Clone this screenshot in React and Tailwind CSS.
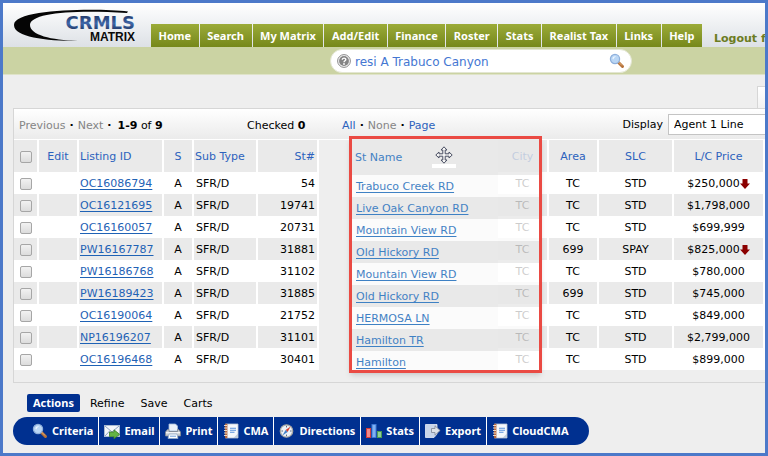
import React from 'react';

const navItems = ['Home', 'Search', 'My Matrix', 'Add/Edit', 'Finance', 'Roster', 'Stats', 'Realist Tax', 'Links', 'Help'];

const listings = [
  { id: 'OC16086794', num: '54', street: 'Trabuco Creek RD', area: 'TC', slc: 'STD', price: '$250,000', drop: true },
  { id: 'OC16121695', num: '19741', street: 'Live Oak Canyon RD', area: 'TC', slc: 'STD', price: '$1,798,000' },
  { id: 'OC16160057', num: '20731', street: 'Mountain View RD', area: 'TC', slc: 'STD', price: '$699,999' },
  { id: 'PW16167787', num: '31881', street: 'Old Hickory RD', area: '699', slc: 'SPAY', price: '$825,000', drop: true },
  { id: 'PW16186768', num: '31102', street: 'Mountain View RD', area: 'TC', slc: 'STD', price: '$780,000' },
  { id: 'PW16189423', num: '31885', street: 'Old Hickory RD', area: '699', slc: 'STD', price: '$745,000' },
  { id: 'OC16190064', num: '21752', street: 'HERMOSA LN', area: 'TC', slc: 'STD', price: '$849,000' },
  { id: 'NP16196207', num: '31101', street: 'Hamilton TR', area: 'TC', slc: 'STD', price: '$2,799,000' },
  { id: 'OC16196468', num: '30401', street: 'Hamilton', area: 'TC', slc: 'STD', price: '$899,000' },
];

const Logo = () => (
  <svg viewBox="0 0 148 44" className="w-[148px] h-[44px] shrink-0" role="img" aria-label="CRMLS Matrix">
    <defs>
      <linearGradient id="logoBlue" x1="0" y1="0" x2="0" y2="1">
        <stop offset="0" stopColor="#16264f" />
        <stop offset="0.55" stopColor="#3f66a8" />
        <stop offset="1" stopColor="#14244a" />
      </linearGradient>
    </defs>
    <path d="M125 8.5 C92 5 11 6 11 22 C11 34 42 38 75 38 C48 37 27 32 27 22 C27 10 70 6.5 124 10 Z" fill="#050505" />
    <text x="132" y="26" textAnchor="end" fontFamily="DejaVu Sans, sans-serif" fontWeight="700" fontSize="18" fill="url(#logoBlue)">CRMLS</text>
    <text x="132" y="38" textAnchor="end" fontFamily="Liberation Sans, sans-serif" fontWeight="700" fontSize="12" fill="#0a0a0a">MATRIX</text>
  </svg>
);

const Magnifier = () => (
  <svg viewBox="0 0 16 16" className="w-4 h-4 shrink-0" aria-hidden="true">
    <path d="M9.5 9.5 L13.5 13.5" stroke="#b5713a" strokeWidth="3" strokeLinecap="round" />
    <path d="M9.5 9 L13 12.5" stroke="#e3b078" strokeWidth="1" />
    <circle cx="6" cy="6" r="4.6" fill="#b9d6f5" stroke="#8fb0dc" strokeWidth="1.2" />
    <path d="M3.4 5.6 C3.8 3.8 5.4 3 7 3.4 C5.6 4 4.8 5 4.4 6.6 Z" fill="#eef6ff" />
  </svg>
);

const HelpIcon = () => (
  <svg viewBox="0 0 16 16" className="w-4 h-4 shrink-0" aria-hidden="true">
    <circle cx="8" cy="8" r="6.4" fill="#f4f4f4" stroke="#8d8d8d" />
    <circle cx="8" cy="8" r="4.9" fill="#858585" />
    <path d="M6.2 6.8 C6.2 4.6 9.8 4.6 9.8 6.6 C9.8 7.8 8 7.8 8 9.2" fill="none" stroke="#fff" strokeWidth="1.4" />
    <circle cx="8" cy="11" r="0.9" fill="#fff" />
  </svg>
);

const EmailIcon = () => (
  <svg viewBox="0 0 16 16" className="w-4 h-4 shrink-0" aria-hidden="true">
    <rect x="0.5" y="2.5" width="15" height="11" fill="#f3f6fa" stroke="#a9bbd2" />
    <path d="M1 3 L8 9 L15 3 M1 13 L6 7.6 M15 13 L10 7.6" fill="none" stroke="#8ba3c4" strokeWidth="1" />
    <path d="M5.5 9 H10 V6.8 L15.6 11.3 L10 15.8 V13.6 H5.5 Z" fill="#63b445" stroke="#3c7f27" strokeWidth="0.8" />
  </svg>
);

const PrintIcon = () => (
  <svg viewBox="0 0 16 16" className="w-4 h-4 shrink-0" aria-hidden="true">
    <path d="M4 1 H10.5 L12.5 3 V8 H4 Z" fill="#e9f1fb" stroke="#a4bddb" strokeWidth="0.8" />
    <path d="M2.5 6.5 H4 V8.5 H12.5 V6.5 H13.5 L15.5 9 V13 H0.5 V9 Z" fill="#c7cbd0" stroke="#878d94" strokeWidth="0.8" />
    <rect x="1" y="9" width="14" height="1.4" fill="#f2f3f5" />
    <path d="M4 11 H12 L13 15.5 H3 Z" fill="#fff" stroke="#8fa9c9" strokeWidth="0.8" />
    <path d="M5 13.2 H11" stroke="#6f9fda" />
  </svg>
);

const BookIcon = () => (
  <svg viewBox="0 0 16 16" className="w-4 h-4 shrink-0" aria-hidden="true">
    <path d="M2.5 1 H15 V15 H2.5 Z" fill="#f5f8fc" stroke="#b9c4d3" strokeWidth="0.8" />
    <rect x="2" y="0.8" width="2.4" height="14.4" fill="#b4653c" />
    <path d="M1 2.5 H4 M1 5 H4 M1 7.5 H4 M1 10 H4 M1 12.5 H4" stroke="#ead9c8" strokeWidth="1" />
    <path d="M7 5.2 H13 M7 7.2 H13 M7 9.2 H11.5" stroke="#5b93dc" strokeWidth="1.1" />
    <path d="M10.5 15 L15 10.5 V15 Z" fill="#c2cddb" />
  </svg>
);

const CompassIcon = () => (
  <svg viewBox="0 0 16 16" className="w-4 h-4 shrink-0" aria-hidden="true">
    <circle cx="7.5" cy="8" r="6.2" fill="#edf2f7" stroke="#a9a9a4" strokeWidth="1.3" />
    <path d="M7.5 2.8 V4.4 M7.5 11.6 V13.2 M2.4 8 H4 M11 8 H12.6" stroke="#5a6b80" />
    <path d="M11.6 3.4 L8.6 9 L6.6 7 Z" fill="#d6402e" />
    <path d="M3.4 12.6 L6.6 7 L8.6 9 Z" fill="#4382c8" />
  </svg>
);

const StatsIcon = () => (
  <svg viewBox="0 0 16 16" className="w-4 h-4 shrink-0" aria-hidden="true">
    <rect x="0.5" y="5.5" width="4" height="9" fill="#f08a8a" stroke="#d43a3a" />
    <rect x="6" y="1.5" width="4" height="13" fill="#7fb0f2" stroke="#3f78d4" />
    <rect x="11.5" y="8.5" width="4" height="6" fill="#8fce95" stroke="#4a9c55" />
  </svg>
);

const ExportIcon = () => (
  <svg viewBox="0 0 16 16" className="w-4 h-4 shrink-0" aria-hidden="true">
    <path d="M0.5 1.5 H12 V11 L9 14.5 H0.5 Z" fill="#c9d6ea" stroke="#e8eef7" strokeWidth="0.8" />
    <path d="M6.5 5.5 H10 V2.8 L15.2 7.5 L10 12.2 V9.5 H6.5 Z" fill="#dfe3e8" stroke="#7d8794" strokeWidth="0.8" />
  </svg>
);

const DropArrow = () => (
  <svg viewBox="0 0 10 10" className="w-[10px] h-[10px] shrink-0" role="img" aria-label="Price drop">
    <path d="M2.5 0 H7.5 V4.5 H10 L5 10 L0 4.5 H2.5 Z" fill="#8b0000" />
  </svg>
);

const MoveCursor = () => (
  <svg viewBox="0 0 18 18" className="w-[18px] h-[18px]" aria-hidden="true">
    <path
      d="M9 0.8 L12 4 H10.2 V7.8 H14 V6 L17.2 9 L14 12 V10.2 H10.2 V14 H12 L9 17.2 L6 14 H7.8 V10.2 H4 V12 L0.8 9 L4 6 V7.8 H7.8 V4 H6 Z"
      fill="#f5f5f5"
      stroke="#4a4f63"
      strokeWidth="1"
    />
  </svg>
);

const actions = [
  { label: 'Criteria', Icon: Magnifier },
  { label: 'Email', Icon: EmailIcon },
  { label: 'Print', Icon: PrintIcon },
  { label: 'CMA', Icon: BookIcon },
  { label: 'Directions', Icon: CompassIcon },
  { label: 'Stats', Icon: StatsIcon },
  { label: 'Export', Icon: ExportIcon },
  { label: 'CloudCMA', Icon: BookIcon },
];

const Check = ({ label }) => (
  <input
    type="checkbox"
    aria-label={label}
    className="block mx-auto appearance-none w-3 h-3 rounded-xs border border-[#a6a6a6] bg-linear-to-b from-[#f2f2f2] to-[#dcdcdc]"
  />
);

const ResultsTable = () => (
  <table className="w-full table-fixed border-collapse whitespace-nowrap text-center">
    <colgroup>
      <col className="w-[24px]" />
      <col className="w-[40px]" />
      <col className="w-[85px]" />
      <col className="w-[30px]" />
      <col className="w-[64px]" />
      <col className="w-[61px]" />
      <col />
      <col className="w-[51px]" />
      <col className="w-[50px]" />
      <col className="w-[75px]" />
      <col className="w-[91px]" />
    </colgroup>
    <thead>
      <tr className="h-8 text-[#2c62bd] *:px-0 *:pb-0 *:pt-0.5 *:font-normal *:bg-[#eaeaea] *:border-r-2 *:border-white">
        <th><Check label="Select all" /></th>
        <th>Edit</th>
        <th className="text-left"><span className="pl-px">Listing ID</span></th>
        <th>S</th>
        <th className="text-left"><span className="pl-px">Sub Type</span></th>
        <th className="text-right"><span className="pr-0.5">St#</span></th>
        <th className="!bg-[#eee] !border-[#eee]"></th>
        <th>City</th>
        <th>Area</th>
        <th>SLC</th>
        <th>L/C Price</th>
      </tr>
    </thead>
    <tbody>
      {listings.map((row) => (
        <tr key={row.id} className="h-[22px] *:px-0 *:pb-0 *:pt-0.5 *:border-r-2 *:border-white odd:*:bg-white even:*:bg-[#eaeaea]">
          <td><Check label={`Select ${row.id}`} /></td>
          <td></td>
          <td className="text-left"><a href="#" className="pl-px text-[#1f62b5] underline underline-offset-2">{row.id}</a></td>
          <td>A</td>
          <td className="text-left"><span className="pl-0.5">SFR/D</span></td>
          <td className="text-right"><span className="pr-0.5">{row.num}</span></td>
          <td className="!bg-[#eee] !border-[#eee]"></td>
          <td>TC</td>
          <td>{row.area}</td>
          <td>{row.slc}</td>
          <td>
            <span className="flex items-center justify-center">
              {row.price}
              {row.drop && <DropArrow />}
            </span>
          </td>
        </tr>
      ))}
    </tbody>
  </table>
);

// Column being dragged, floats above the results
const DraggedColumn = () => (
  <div className="absolute left-[335px] -top-1 bottom-[9px] w-[193px] border-3 border-[#ea4a43] shadow-md overflow-hidden">
    <div className="opacity-80">
      <div className="h-9 pt-0.5 pl-[3px] flex items-center bg-[#e8e8e8] text-[#1367ba]">St Name</div>
      {listings.map((row) => (
        <div key={row.id} className="h-[22px] pt-0.5 pl-1 flex items-center odd:bg-[#e8e8e8] even:bg-white">
          <a href="#" className="text-[#1367ba] underline underline-offset-2">{row.street}</a>
        </div>
      ))}
    </div>
    <div className="absolute left-20 top-[7px] w-6 h-[22px] flex justify-center border-b-4 border-white">
      <MoveCursor />
    </div>
  </div>
);

export default function App() {
  return (
    <div className="min-h-screen overflow-hidden border-3 border-[#4c79c9] bg-[#eee] font-['DejaVu_Sans',sans-serif] text-[11px] leading-4 text-black">
      {/* Header */}
      <header className="flex items-end overflow-hidden bg-linear-to-b from-white to-[#dde1e6]">
        <Logo />
        <nav className="w-[551px] flex shrink-0 gap-px whitespace-nowrap font-['Noto_Sans',sans-serif] font-bold text-white">
          {navItems.map((item) => (
            <a key={item} href="#" className="grow h-[23px] px-[7px] flex items-center justify-center bg-linear-to-b from-[#9bab38] to-[#76881a]">
              {item}
            </a>
          ))}
        </nav>
        <a href="#" className="pl-3 whitespace-nowrap font-bold text-[#6c7c22]">Logout f</a>
      </header>

      {/* Search */}
      <div className="h-7 flex items-center bg-[#cbd3a3] border-b border-[#dfe3c8]">
        <div className="ml-[327px] w-[302px] h-6 pl-[5px] pr-1.5 flex items-center gap-[3px] rounded-full bg-white border border-[#e3e6d2]">
          <HelpIcon />
          <input
            type="text"
            aria-label="Search"
            defaultValue="resi A Trabuco Canyon"
            className="flex-1 min-w-0 pt-0.5 bg-transparent text-xs text-[#4577d2] outline-none"
          />
          <button type="button" aria-label="Run search"><Magnifier /></button>
        </div>
      </div>

      <main className="pl-2.5">
        <div className="h-[33px] flex items-end justify-end">
          <div className="w-2 h-[22px] border-l border-t border-[#d6d6d6] bg-linear-to-b from-white to-[#f2f2f2]"></div>
        </div>

        {/* Results panel */}
        <section className="border-l border-t border-b border-[#d6d6d6]">
          <div className="h-[30px] pl-[5px] flex items-center bg-linear-to-b from-white to-[#ebebeb]">
            <div className="w-[228px] pt-[3px] flex gap-1">
              <span className="text-[#858585]">Previous</span>
              <b>·</b>
              <span className="text-[#858585]">Next</span>
              <b>·</b>
              <span className="pl-0.5"><b>1-9</b> of <b>9</b></span>
            </div>
            <div className="w-[95px] pt-[3px]">Checked <b>0</b></div>
            <div className="pt-[3px] flex gap-1">
              <a href="#" className="text-[#2c62bd]">All</a>
              <b>·</b>
              <span className="text-[#858585]">None</span>
              <b>·</b>
              <a href="#" className="text-[#2c62bd]">Page</a>
            </div>
            <label htmlFor="display" className="ml-auto pt-0.5 pr-[5px]">Display</label>
            <select id="display" className="appearance-none w-[97px] h-[21px] pt-px pl-[5px] bg-white border border-r-0 border-[#c4c4c4]">
              <option>Agent 1 Line</option>
            </select>
          </div>
          <div className="relative pb-3 border-t border-white">
            <ResultsTable />
            <DraggedColumn />
          </div>
        </section>

        {/* Bottom tabs */}
        <div className="pt-[11px] pl-3.5 flex items-center">
          <button type="button" className="h-[18px] px-1.5 mr-0.5 rounded-xs bg-[#003090] font-['Noto_Sans',sans-serif] font-bold text-white">Actions</button>
          <button type="button" className="pt-0.5 px-2">Refine</button>
          <button type="button" className="pt-0.5 px-2">Save</button>
          <button type="button" className="pt-0.5 px-2">Carts</button>
        </div>

        {/* Action bar */}
        <div className="mt-[5px] mb-2 w-fit flex gap-px rounded-full overflow-hidden bg-white font-['Noto_Sans',sans-serif] font-bold text-white">
          {actions.map(({ label, Icon }) => (
            <button key={label} type="button" className="h-7 px-[5px] first:pl-[19px] last:pr-5 flex items-center gap-1 bg-[#003090]">
              <Icon />
              {label}
            </button>
          ))}
        </div>
      </main>
    </div>
  );
}
